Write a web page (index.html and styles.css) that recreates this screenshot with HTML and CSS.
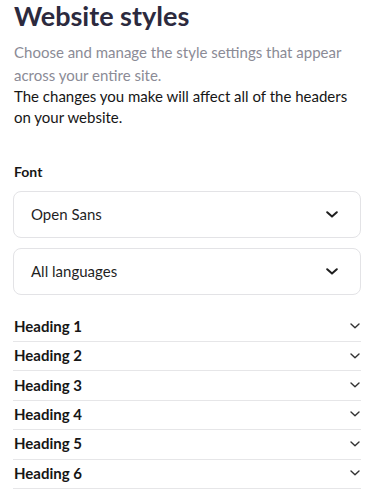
FILE: index.html
```html
<!DOCTYPE html>
<html lang="en">
<head>
<meta charset="utf-8">
<title>Website styles</title>
<link rel="stylesheet" href="styles.css">
</head>
<body>
<main class="page">
  <h1 class="title">Website styles</h1>
  <p class="intro">Choose and manage the style settings that appear across your entire site.</p>
  <p class="note">The changes you make will affect all of the headers on your website.</p>

  <h2 class="label">Font</h2>
  <div class="select">
    <span class="select-text">Open Sans</span>
    <svg class="select-chev" width="12" height="7" viewBox="0 0 12 7"><path d="M1.2 1.2 L6 5.6 L10.8 1.2" fill="none" stroke="#1f1f1f" stroke-width="2" stroke-linecap="round" stroke-linejoin="round"/></svg>
  </div>
  <div class="select">
    <span class="select-text">All languages</span>
    <svg class="select-chev" width="12" height="7" viewBox="0 0 12 7"><path d="M1.2 1.2 L6 5.6 L10.8 1.2" fill="none" stroke="#1f1f1f" stroke-width="2" stroke-linecap="round" stroke-linejoin="round"/></svg>
  </div>

  <ul class="headings">
    <li class="row"><span>Heading 1</span><svg class="row-chev" width="10" height="6" viewBox="0 0 10 6"><path d="M1 1 L5 4.8 L9 1" fill="none" stroke="#333" stroke-width="1.4" stroke-linecap="round" stroke-linejoin="round"/></svg></li>
    <li class="row"><span>Heading 2</span><svg class="row-chev" width="10" height="6" viewBox="0 0 10 6"><path d="M1 1 L5 4.8 L9 1" fill="none" stroke="#333" stroke-width="1.4" stroke-linecap="round" stroke-linejoin="round"/></svg></li>
    <li class="row"><span>Heading 3</span><svg class="row-chev" width="10" height="6" viewBox="0 0 10 6"><path d="M1 1 L5 4.8 L9 1" fill="none" stroke="#333" stroke-width="1.4" stroke-linecap="round" stroke-linejoin="round"/></svg></li>
    <li class="row"><span>Heading 4</span><svg class="row-chev" width="10" height="6" viewBox="0 0 10 6"><path d="M1 1 L5 4.8 L9 1" fill="none" stroke="#333" stroke-width="1.4" stroke-linecap="round" stroke-linejoin="round"/></svg></li>
    <li class="row"><span>Heading 5</span><svg class="row-chev" width="10" height="6" viewBox="0 0 10 6"><path d="M1 1 L5 4.8 L9 1" fill="none" stroke="#333" stroke-width="1.4" stroke-linecap="round" stroke-linejoin="round"/></svg></li>
    <li class="row"><span>Heading 6</span><svg class="row-chev" width="10" height="6" viewBox="0 0 10 6"><path d="M1 1 L5 4.8 L9 1" fill="none" stroke="#333" stroke-width="1.4" stroke-linecap="round" stroke-linejoin="round"/></svg></li>
  </ul>
</main>
</body>
</html>
```
FILE: styles.css
```css
* { box-sizing: border-box; }
html, body { margin: 0; padding: 0; background: #ffffff; }
body {
  font-family: Lato, "Open Sans", "Liberation Sans", sans-serif;
  color: #1a1a1a;
  -webkit-font-smoothing: antialiased;
}
.page {
  padding: 0 14px 0 13px;
  width: 375px;
}
.title {
  margin: 0 0 0 1px;
  padding-top: 1px;
  font-size: 27px;
  line-height: 29px;
  font-weight: 700;
  color: #2c2a3e;
}
.intro {
  margin: 11px 0 0 1px;
  font-size: 15px;
  line-height: 23px;
  color: #8b8b96;
}
.note {
  margin: -1px 0 0 1px;
  font-size: 15px;
  line-height: 20.5px;
  color: #161616;
}
.label {
  margin: 35px 0 0 1px;
  font-size: 14px;
  line-height: 20px;
  font-weight: 700;
  color: #161616;
}
.select {
  margin-top: 9px;
  height: 47px;
  border: 1px solid #e3e3e6;
  border-radius: 8px;
  display: flex;
  align-items: center;
  justify-content: space-between;
  padding: 0 22px 0 17px;
}
.select + .select { margin-top: 10px; }
.select-text {
  font-size: 15px;
  color: #1f1f1f;
  padding-bottom: 1px;
}
.select-chev { display: block; }
.headings {
  list-style: none;
  margin: 17.6px 0 0;
  padding: 0;
}
.row {
  height: 29.4px;
  border-bottom: 1px solid #e6e6e8;
  display: flex;
  align-items: center;
  justify-content: space-between;
  padding: 0 1px 2px 1px;
  font-size: 15px;
  font-weight: 700;
  color: #161616;
}
.row-chev { display: block; margin-top: 1px; }
```
